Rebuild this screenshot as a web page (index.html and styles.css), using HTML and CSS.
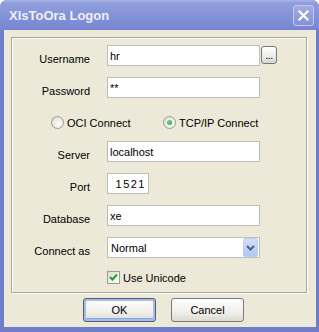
FILE: index.html
```html
<!DOCTYPE html>
<html lang="en">
<head>
    <meta charset="UTF-8">
    <title>XlsToOra Logon</title>
    <link rel="stylesheet" href="styles.css">
</head>
<body>

    <div class="window">
        <div class="titlebar">
            <span class="title">XlsToOra Logon</span>
            <button class="close" aria-label="Close">
                <svg width="21" height="21" viewBox="0 0 21 21">
                    <path d="M6 6 L15 15 M15 6 L6 15" stroke="#fff" stroke-width="2.4" stroke-linecap="square" fill="none"/>
                </svg>
            </button>
        </div>

        <div class="client">
            <div class="group">
                <label class="caption">Username</label>
                <div class="with-browse">
                    <input class="text" type="text" value="hr">
                    <button class="browse">...</button>
                </div>

                <label class="caption">Password</label>
                <input class="text" type="text" value="**">

                <div class="radios">
                    <span class="option first"><span class="radio"></span>OCI Connect</span>
                    <span class="option"><span class="radio checked"></span>TCP/IP Connect</span>
                </div>

                <label class="caption">Server</label>
                <input class="text" type="text" value="localhost">

                <label class="caption">Port</label>
                <input class="text port" type="text" value="1521">

                <label class="caption">Database</label>
                <input class="text" type="text" value="xe">

                <label class="caption">Connect as</label>
                <div class="combo">
                    <span>Normal</span>
                    <span class="drop">
                        <svg width="15" height="19" viewBox="0 0 15 19">
                            <path d="M4 8 L7.5 11.5 L11 8" stroke="#4d6185" stroke-width="2" fill="none"/>
                        </svg>
                    </span>
                </div>

                <div class="check-row">
                    <span class="checkbox">
                        <svg width="11" height="11" viewBox="0 0 11 11">
                            <path d="M2 5 L4.5 7.5 L9 2.5" stroke="#21a121" stroke-width="2" fill="none"/>
                        </svg>
                    </span>
                    Use Unicode
                </div>
            </div>

            <div class="actions">
                <button class="btn default">OK</button>
                <button class="btn">Cancel</button>
            </div>
        </div>
    </div>

</body>
</html>
```

FILE: styles.css
```css
* {
    margin: 0;
    padding: 0;
    box-sizing: border-box;
}
body {
    font-family: "Liberation Sans", Arial, sans-serif;
    font-size: 11px;
    color: #000;
    background-color: #fff;
}
.window {
    width: 319px;
    height: 332px;
    display: flex;
    flex-direction: column;
    background-color: #6e7dca;
    border-radius: 7px 7px 0 0;
    overflow: hidden;
}
.titlebar {
    height: 30px;
    display: flex;
    align-items: center;
    justify-content: space-between;
    padding: 0 5px 0 9px;
    background: linear-gradient(#aab4e8 0, #919edd 3px, #8593d8 50%, #7785d0 100%);
}
.title {
    font-size: 13px;
    font-weight: bold;
    color: #eef0fa;
    margin-top: 1px;
}
.close {
    width: 21px;
    height: 21px;
    border: 1px solid #c3caef;
    border-radius: 3px;
    background: linear-gradient(#a2ade5, #8391d6);
    display: flex;
    align-items: center;
    justify-content: center;
}
.close svg {
    display: block;
}
.client {
    flex: 1;
    margin: 0 3px 5px 4px;
    background-color: #ece9d8;
    padding-top: 7px;
}
.group {
    margin-left: 7px;
    width: 296px;
    height: 256px;
    border: 1px solid #a8a697;
    box-shadow: inset 1px 1px 0 #fff, 1px 1px 0 #fff;
    padding-top: 7px;
    display: grid;
    grid-template-columns: 78px auto;
    grid-auto-rows: 21px;
    column-gap: 17px;
    row-gap: 11px;
    justify-content: start;
}
.caption {
    text-align: right;
    padding-top: 8px;
    line-height: 13px;
}
.text {
    width: 153px;
    height: 21px;
    border: 1px solid #bdbdbd;
    background-color: #fff;
    font: inherit;
    padding: 0 2px;
    outline: none;
}
.port {
    width: 42px;
    text-align: right;
    letter-spacing: 1.5px;
}
.with-browse {
    display: flex;
    align-items: flex-start;
    width: 153px;
}
.with-browse .text {
    flex: none;
}
.browse {
    flex: none;
    width: 16px;
    height: 18px;
    margin: 1px 0 0 1px;
    border: 1px solid #777;
    border-radius: 3px;
    background: linear-gradient(#fff, #e8e8e1 70%, #d6d5cc);
    font: inherit;
    line-height: 10px;
    letter-spacing: -0.5px;
}
.radios {
    grid-column: 1 / -1;
    display: flex;
    align-items: flex-end;
    padding: 0 0 1px 39px;
}
.option {
    display: flex;
    align-items: center;
    gap: 3px;
}
.option.first {
    width: 112px;
}
.radio {
    width: 13px;
    height: 13px;
    border: 1px solid #9a9a96;
    border-radius: 50%;
    background: radial-gradient(circle at 65% 65%, #fff, #e4e3dc 70%, #d2d1c8);
    display: flex;
    align-items: center;
    justify-content: center;
}
.radio.checked::after {
    content: "";
    width: 5px;
    height: 5px;
    border-radius: 50%;
    background: radial-gradient(circle at 35% 35%, #7ed27e, #21a121);
}
.combo {
    width: 153px;
    height: 21px;
    border: 1px solid #bdbdbd;
    background-color: #fff;
    display: flex;
    align-items: center;
    justify-content: space-between;
    padding-left: 3px;
}
.drop {
    width: 15px;
    height: 19px;
    margin-right: 1px;
    border: 1px solid #bccef6;
    border-radius: 2px;
    background: linear-gradient(#d2defb, #b3c6f5);
}
.drop svg {
    display: block;
    margin: -1px;
}
.check-row {
    grid-column: 2;
    display: flex;
    align-items: center;
    gap: 3px;
    align-self: start;
    margin-top: 2px;
}
.checkbox {
    width: 13px;
    height: 13px;
    border: 1px solid #9a9a96;
    background: linear-gradient(135deg, #dcdbd3, #fff);
    display: flex;
    align-items: center;
    justify-content: center;
}
.actions {
    display: flex;
    gap: 15px;
    padding-left: 79px;
    margin-top: 5px;
}
.btn {
    width: 73px;
    height: 24px;
    border: 1px solid #7a7a7a;
    border-radius: 3px;
    background: linear-gradient(#fff, #f0efea 60%, #dcdad2);
    font: inherit;
    color: #000;
}
.btn.default {
    border-color: #5b5b70;
    box-shadow: inset 0 0 0 2px #a5bcef, inset 0 -1px 0 2px #8aa7ea;
}
```
